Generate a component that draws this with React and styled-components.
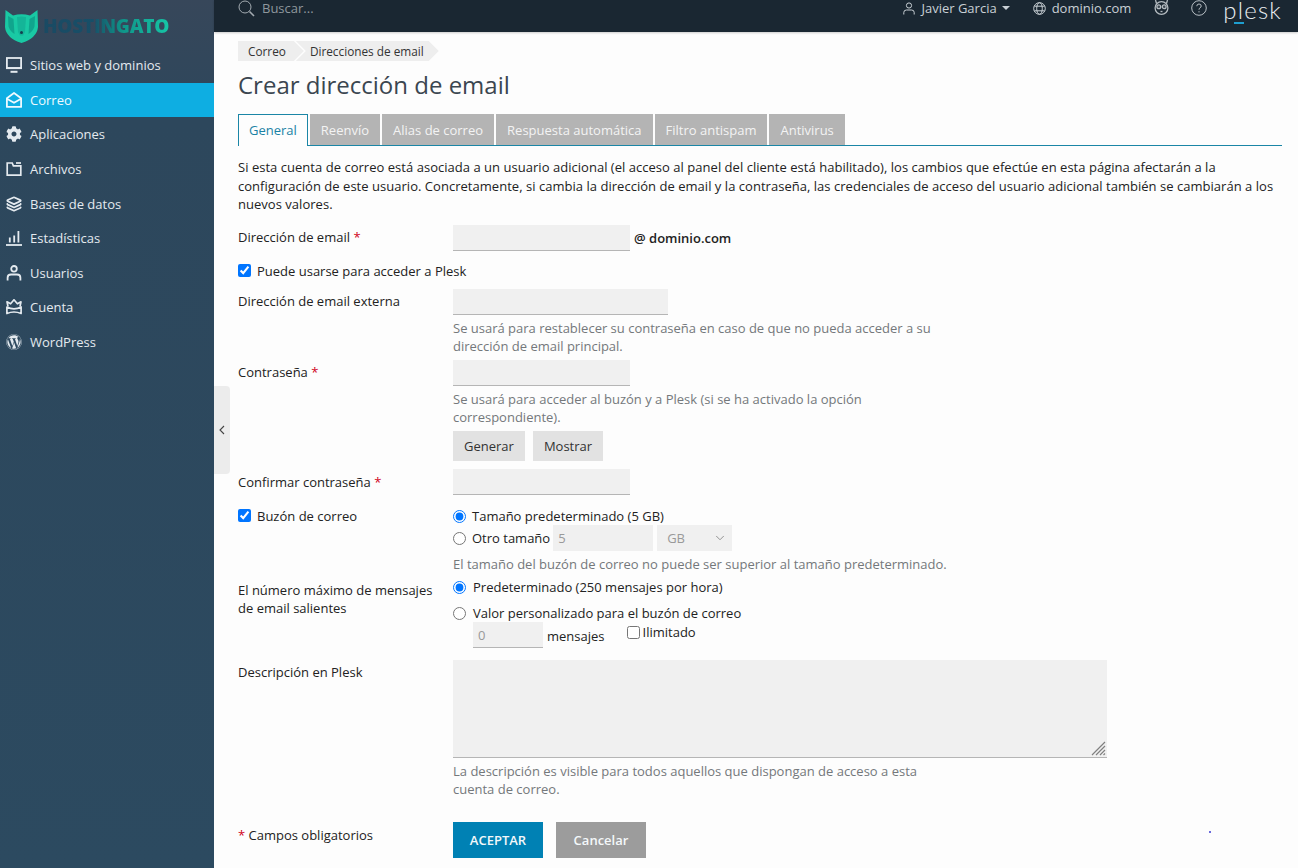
import React from 'react';
import styled, { createGlobalStyle } from 'styled-components';
import { FaWordpress, FaCog } from 'react-icons/fa';
import { Layers, ChevronDown } from 'lucide-react';

const GlobalStyle = createGlobalStyle`
  html, body { margin: 0; padding: 0; height: 100%; overflow: hidden; }
  body { font-family: "Open Sans", "Liberation Sans", sans-serif; font-size: 13px; color: #222; background: #fdfdfd; }
  * { box-sizing: border-box; }
`;

const Page = styled.div`
  display: flex;
  height: 868px;
  position: relative;
`;

const Sidebar = styled.aside`
  width: 214px;
  flex: none;
  background: linear-gradient(180deg, #37475a 0, #2d475c 120px, #2c4a60 100%);
`;

const LogoWrap = styled.div`
  height: 48px;
  display: flex;
  align-items: center;
  padding: 5px 0 0 5px;
  gap: 5px;
`;

const LogoText = styled.span`
  font-family: "Open Sans", sans-serif;
  font-weight: 800;
  font-size: 19px;
  letter-spacing: -0.25px;
  margin-top: -2px;
  background: linear-gradient(90deg, #1a4a63 0, #174f68 40%, #0f9388 62%, #16c5a6 100%);
  -webkit-background-clip: text;
  background-clip: text;
  color: transparent;
`;

const NavList = styled.nav`
  display: flex;
  flex-direction: column;
`;

const NavItem = styled.a`
  height: 34.6px;
  display: flex;
  align-items: center;
  gap: 8px;
  padding-left: 6px;
  color: ${(p) => (p.$active ? '#eefaff' : '#e4eaef')};
  background: ${(p) => (p.$active ? '#0eaee2' : 'transparent')};
  font-size: 13px;
  svg { width: 16px; height: 16px; flex: none; }
`;

const Main = styled.div`
  flex: 1;
  min-width: 0;
  display: flex;
  flex-direction: column;
`;

const Topbar = styled.header`
  height: 32px;
  flex: none;
  background: #1a2732;
  box-shadow: 0 1px 2px rgba(0, 0, 0, 0.2);
  display: flex;
  align-items: flex-start;
  color: #c9d0d5;
  padding: 0 16px 0 24px;
`;

const Search = styled.div`
  display: flex;
  align-items: center;
  gap: 7px;
  color: #8f979d;
  height: 16px;
  flex: 1;
`;

const TopItem = styled.div`
  display: flex;
  align-items: center;
  gap: 6px;
  margin-right: ${(p) => p.$mr}px;
  height: 16px;
  white-space: nowrap;
`;

const Caret = styled.span`
  width: 0;
  height: 0;
  border-left: 4px solid transparent;
  border-right: 4px solid transparent;
  border-top: 4px solid #c9d0d5;
  margin-left: -1px;
`;

const PleskLogo = styled.div`
  position: relative;
  font-family: "Lato", sans-serif;
  font-weight: 300;
  font-size: 24px;
  letter-spacing: 1.2px;
  line-height: 20px;
  height: 24px;
  color: #e8edf0;
  &::after {
    content: '';
    position: absolute;
    left: 11px;
    top: 22px;
    width: 10px;
    height: 2px;
    background: #1e9fd0;
  }
`;

const Content = styled.main`
  flex: 1;
  padding: 9px 16px 0 24px;
  min-height: 0;
`;

const Crumbs = styled.div`
  display: flex;
  height: 20px;
`;

const Crumb = styled.span`
  display: flex;
  align-items: center;
  height: 20px;
  background: #eeeeee;
  font-size: 11.8px;
  color: #333;
  padding: ${(p) => (p.$first ? '0 18px 1px 10px' : '0 15px 1px 14px')};
  margin-left: ${(p) => (p.$first ? 0 : '-8px')};
  clip-path: ${(p) =>
    p.$first
      ? 'polygon(0 0, calc(100% - 10px) 0, 100% 50%, calc(100% - 10px) 100%, 0 100%)'
      : 'polygon(0 0, calc(100% - 10px) 0, 100% 50%, calc(100% - 10px) 100%, 0 100%, 10px 50%)'};
`;

const Title = styled.h1`
  font-weight: 400;
  font-size: 24px;
  line-height: 32px;
  color: #3b4650;
  margin: 8px 0 13px;
`;

const Tabs = styled.div`
  display: flex;
  gap: 1px;
  height: 32px;
  border-bottom: 1px solid #1b86a6;
`;

const Tab = styled.a`
  display: flex;
  align-items: center;
  height: ${(p) => (p.$active ? '32px' : '31px')};
  padding: ${(p) => (p.$active ? '0 10px 1px' : '0 11px')};
  margin-right: 1px;
  color: ${(p) => (p.$active ? '#1a82a5' : '#f3f3f3')};
  background: ${(p) => (p.$active ? '#fdfdfd' : '#b4b4b4')};
  border: ${(p) => (p.$active ? '1px solid #1b86a6' : '0')};
  border-bottom: 0;
  font-size: 13px;
`;

const Intro = styled.p`
  margin: 12px 0 11.5px;
  font-size: 13px;
  letter-spacing: 0.03px;
  line-height: 18.5px;
  color: #222;
`;

const Row = styled.div`
  display: grid;
  grid-template-columns: 215px 1fr;
  margin-bottom: ${(p) => p.$mb ?? 0}px;
`;

const Label = styled.div`
  font-size: 13px;
  line-height: 18px;
  color: #222;
  padding: ${(p) => p.$pt ?? 3}px 15px 0 0;
`;

const CheckLabel = styled.label`
  display: flex;
  align-items: flex-start;
  gap: 6px;
  font-size: 13px;
  line-height: 18px;
  color: #222;
  padding-top: ${(p) => p.$pt ?? 0}px;
  grid-column: ${(p) => (p.$wide ? '1 / 3' : 'auto')};
  input { margin: 2px 0 0; width: 13px; height: 13px; }
`;

const Req = styled.span`
  color: #d0021b;
`;

const Field = styled.div`
  display: flex;
  flex-direction: column;
  align-items: flex-start;
`;

const Inline = styled.div`
  display: flex;
  align-items: center;
  height: ${(p) => p.$h || 'auto'};
  margin: ${(p) => p.$mt ?? 0}px 0 0 ${(p) => p.$ml ?? 0}px;
`;

const TextInput = styled.input`
  width: ${(p) => p.$w}px;
  height: 26px;
  border: 0;
  border-bottom: ${(p) => (p.$flat ? '0' : '1px solid #b5b5b5')};
  margin-left: ${(p) => p.$ml ?? 0}px;
  background: #f0f0f0;
  padding: 0 5px;
  font: inherit;
  color: #999;
  outline: none;
`;

const Domain = styled.strong`
  font-weight: 600;
  margin-left: 4px;
  font-size: 13px;
`;

const Hint = styled.div`
  width: ${(p) => p.$w || 500}px;
  margin-top: ${(p) => p.$mt ?? 4}px;
  font-size: 13px;
  line-height: 18px;
  color: #74787b;
`;

const Buttons = styled.div`
  display: flex;
  gap: 8px;
  margin-top: 5px;
`;

const GreyButton = styled.button`
  height: 30px;
  border: 0;
  padding: 0 11px;
  background: #e2e2e2;
  font: inherit;
  color: #333;
`;

const RadioLine = styled.label`
  display: flex;
  align-items: center;
  gap: ${(p) => p.$gap ?? 6}px;
  height: ${(p) => p.$h ?? 22}px;
  font-size: 13px;
  color: #222;
  white-space: nowrap;
  input { margin: 0; width: 13px; height: 13px; }
`;

const SelectWrap = styled.div`
  position: relative;
  margin-left: 4px;
  svg {
    position: absolute;
    right: 5px;
    top: 6px;
    width: 14px;
    height: 14px;
    color: #8c8c8c;
    pointer-events: none;
  }
`;

const SizeSelect = styled.select`
  display: block;
  appearance: none;
  width: 75px;
  height: 26px;
  border: 0;
  background: #f0f0f0;
  font: inherit;
  color: #999;
  padding-left: 10px;
  opacity: 1;
`;

const Unit = styled.span`
  margin: 2px 0 0 4px;
`;

const UnlimitedBox = styled.label`
  display: flex;
  align-items: flex-start;
  gap: 3px;
  margin: -7px 0 0 22px;
  line-height: 18px;
  input { margin: 3px 0 0; width: 13px; height: 13px; }
`;

const AreaWrap = styled.div`
  position: relative;
  width: 654px;
  svg {
    position: absolute;
    right: 1px;
    bottom: 2px;
    pointer-events: none;
  }
`;

const DescArea = styled.textarea`
  display: block;
  width: 654px;
  height: 98px;
  border: 0;
  border-bottom: 1px solid #b5b5b5;
  background: #f0f0f0;
  outline: none;
  resize: none;
`;

const Footer = styled.div`
  display: grid;
  grid-template-columns: 215px 1fr;
  margin-top: 24px;
  position: relative;
`;

const FooterLabel = styled.div`
  padding-top: 4px;
  line-height: 18px;
`;

const FooterButtons = styled.div`
  display: flex;
  gap: 13px;
`;

const ActionButton = styled.button`
  width: 90px;
  height: 36px;
  border: 0;
  background: ${(p) => (p.$primary ? '#0081b4' : '#9c9c9c')};
  color: #f4f8fa;
  font: inherit;
  font-weight: 600;
  font-size: 13px;
`;

const Speck = styled.span`
  position: absolute;
  left: 971px;
  top: 9px;
  width: 2px;
  height: 2px;
  background: #3a3ad0;
  border-radius: 50%;
`;

const Collapse = styled.div`
  position: absolute;
  left: 214px;
  top: 386px;
  width: 16px;
  height: 88px;
  background: #ececec;
  border-radius: 0 4px 4px 0;
  display: flex;
  align-items: center;
  justify-content: center;
  color: #444;
`;

const CatLogo = () => (
  <svg width="33" height="33" viewBox="0 0 33 33">
    <path d="M.5 0 8 5.500Q16.500 3 25 5.500L32.500 0 33 17Q32 28 16.500 33 1 28 0 17Z" fill="#19c9a4" />
    <path d="M3 6 8.500 9 9.500 24Q5 21 3.500 16.500Z M30 6 24.500 9 23.500 24Q28 21 29.500 16.500Z" fill="#10a58d" />
    <path d="M12 7Q16.500 6 21 7L20 22 18 25.500H15L13 22Z" fill="#14b598" />
    <circle cx="16.500" cy="22.500" r="1.500" fill="#14404f" />
  </svg>
);

const icons = {
  monitor: (
    <svg viewBox="0 0 16 16" fill="none" stroke="currentColor" strokeWidth="1.8">
      <rect x="0.9" y="1" width="14.2" height="10" />
      <path d="M0 11.200h16" strokeWidth="1.800" />
      <path d="M4.500 14.800h7" strokeWidth="2" />
    </svg>
  ),
  mail: (
    <svg viewBox="0 0 16 16" fill="none" stroke="currentColor" strokeWidth="1.8" strokeLinejoin="round">
      <path d="M.9 6.200 8 1l7.100 5.200v8.700H.9z" />
      <path d="M.9 6.800 8 10.800l7.100-4" />
    </svg>
  ),
  folder: (
    <svg viewBox="0 0 16 16" fill="none" stroke="currentColor" strokeWidth="1.7">
      <path d="M1.200 2v12.200h13.600V4.800H7.400L6.200 2z" />
      <path d="M10 2h5" />
    </svg>
  ),
  chart: (
    <svg viewBox="0 0 16 16" fill="none" stroke="currentColor" strokeWidth="1.8">
      <path d="M0 15h16" />
      <path d="M3.800 12.500V7.500M8.200 12.500V5.500M12.400 12.500V1" />
    </svg>
  ),
  user: (
    <svg viewBox="0 0 16 16" fill="none" stroke="currentColor" strokeWidth="1.8">
      <circle cx="8" cy="3.800" r="2.800" />
      <path d="M1.600 15.500v-2.800Q1.600 9.500 5 9.500h6q3.400 0 3.400 3.200v2.800" />
    </svg>
  ),
  crown: (
    <svg viewBox="0 0 16 16" fill="none" stroke="currentColor" strokeWidth="1.7" strokeLinejoin="round">
      <path d="M2 7.500 1 2.800l3.600 2L8 .8l3.400 4 3.600-2-1 4.700" />
      <path d="M.9 8q7.100 3.600 14.200 0v6.500Q8 11.500.9 14.500z" />
    </svg>
  ),
};

const navItems = [
  { label: 'Sitios web y dominios', icon: icons.monitor },
  { label: 'Correo', icon: icons.mail, active: true },
  { label: 'Aplicaciones', icon: <FaCog /> },
  { label: 'Archivos', icon: icons.folder },
  { label: 'Bases de datos', icon: <Layers strokeWidth={2.7} /> },
  { label: 'Estadísticas', icon: icons.chart },
  { label: 'Usuarios', icon: icons.user },
  { label: 'Cuenta', icon: icons.crown },
  { label: 'WordPress', icon: <FaWordpress /> },
];

const tabs = ['General', 'Reenvío', 'Alias de correo', 'Respuesta automática', 'Filtro antispam', 'Antivirus'];

function App() {
  return (
    <Page>
      <GlobalStyle />
      <Sidebar>
        <LogoWrap>
          <CatLogo />
          <LogoText>HOSTINGATO</LogoText>
        </LogoWrap>
        <NavList>
          {navItems.map((item) => (
            <NavItem key={item.label} $active={item.active}>
              {item.icon}
              {item.label}
            </NavItem>
          ))}
        </NavList>
      </Sidebar>

      <Collapse>
        <svg width="6" height="10" viewBox="0 0 6 10" fill="none" stroke="#444" strokeWidth="1.1">
          <path d="M5 1 1 5l4 4" />
        </svg>
      </Collapse>

      <Main>
        <Topbar>
          <Search>
            <svg width="17" height="17" viewBox="0 0 17 17" fill="none" stroke="#a3abb1" strokeWidth="1">
              <circle cx="7" cy="7" r="6" />
              <path d="m11.500 11.500 4.500 4.500" strokeWidth="1.600" />
            </svg>
            Buscar...
          </Search>
          <TopItem $mr={23}>
            <svg width="12" height="13" viewBox="0 0 12 13" fill="none" stroke="#c9d0d5" strokeWidth="1">
              <circle cx="6" cy="3.500" r="2.600" />
              <path d="M.8 12.500v-2Q.8 8 3.400 8h5.200q2.600 0 2.600 2.500v2" />
            </svg>
            Javier Garcia
            <Caret />
          </TopItem>
          <TopItem $mr={23}>
            <svg width="13" height="13" viewBox="0 0 13 13" fill="none" stroke="#c9d0d5" strokeWidth="1">
              <circle cx="6.500" cy="6.500" r="5.800" />
              <ellipse cx="6.500" cy="6.500" rx="2.800" ry="5.800" />
              <path d="M1.400 4.200h10.200M1.400 8.800h10.200" />
            </svg>
            dominio.com
          </TopItem>
          <TopItem $mr={22}>
            <svg width="15" height="16" viewBox="0 0 15 16" fill="none" stroke="#b4bbc0" strokeWidth="1.300">
              <circle cx="7.500" cy="8" r="6.400" />
              <path d="M2.500 3.500 1.500 0M12.500 3.500l1-3.500" />
              <circle cx="4.800" cy="6.800" r="1.900" fill="#3a4650" />
              <circle cx="10.200" cy="6.800" r="1.900" fill="#3a4650" />
              <path d="M6.500 11.500h2" />
            </svg>
          </TopItem>
          <TopItem $mr={16}>
            <svg width="16" height="16" viewBox="0 0 16 16" fill="none" stroke="#b9c0c5" strokeWidth="1">
              <circle cx="8" cy="8" r="7.300" />
              <path d="M5.800 6.200q0-2.200 2.200-2.200t2.200 2q0 1.200-1.200 1.900T8 9.700" />
              <path d="M8 11.200v1.200" />
            </svg>
          </TopItem>
          <PleskLogo>plesk</PleskLogo>
        </Topbar>

        <Content>
          <Crumbs>
            <Crumb $first>Correo</Crumb>
            <Crumb>Direcciones de email</Crumb>
          </Crumbs>
          <Title>Crear dirección de email</Title>
          <Tabs>
            {tabs.map((t, i) => (
              <Tab key={t} $active={i === 0}>{t}</Tab>
            ))}
          </Tabs>
          <Intro>
            Si esta cuenta de correo está asociada a un usuario adicional (el acceso al panel del cliente está habilitado), los cambios que efectúe en esta página afectarán a la configuración de este usuario. Concretamente, si cambia la dirección de email y la contraseña, las credenciales de acceso del usuario adicional también se cambiarán a los nuevos valores.
          </Intro>

          <Row $mb={11}>
            <Label>Dirección de email <Req>*</Req></Label>
            <Inline>
              <TextInput $w={177} />
              <Domain>@ dominio.com</Domain>
            </Inline>
          </Row>

          <Row $mb={9}>
            <CheckLabel $wide>
              <input type="checkbox" defaultChecked />
              Puede usarse para acceder a Plesk
            </CheckLabel>
          </Row>

          <Row $mb={5}>
            <Label>Dirección de email externa</Label>
            <Field>
              <TextInput $w={215} />
              <Hint>Se usará para restablecer su contraseña en caso de que no pueda acceder a su dirección de email principal.</Hint>
            </Field>
          </Row>

          <Row $mb={8}>
            <Label>Contraseña <Req>*</Req></Label>
            <Field>
              <TextInput $w={177} />
              <Hint>Se usará para acceder al buzón y a Plesk (si se ha activado la opción correspondiente).</Hint>
              <Buttons>
                <GreyButton>Generar</GreyButton>
                <GreyButton>Mostrar</GreyButton>
              </Buttons>
            </Field>
          </Row>

          <Row $mb={10}>
            <Label $pt={4}>Confirmar contraseña <Req>*</Req></Label>
            <TextInput $w={177} />
          </Row>

          <Row $mb={3}>
            <CheckLabel $pt={2}>
              <input type="checkbox" defaultChecked />
              Buzón de correo
            </CheckLabel>
            <Field>
              <RadioLine>
                <input type="radio" name="size" defaultChecked />
                Tamaño predeterminado (5 GB)
              </RadioLine>
              <Inline $h="22px">
                <RadioLine>
                  <input type="radio" name="size" />
                  Otro tamaño
                </RadioLine>
                <TextInput $w={100} $ml={3} $flat defaultValue="5" />
                <SelectWrap>
                  <SizeSelect disabled defaultValue="GB">
                    <option>GB</option>
                  </SizeSelect>
                  <ChevronDown strokeWidth={1.6} />
                </SelectWrap>
              </Inline>
              <Hint $w={600} $mt={6}>El tamaño del buzón de correo no puede ser superior al tamaño predeterminado.</Hint>
            </Field>
          </Row>

          <Row $mb={12}>
            <Label $pt={5}>El número máximo de mensajes de email salientes</Label>
            <Field>
              <RadioLine $gap={7}>
                <input type="radio" name="limit" defaultChecked />
                Predeterminado (250 mensajes por hora)
              </RadioLine>
              <RadioLine $gap={7} $h={30}>
                <input type="radio" name="limit" />
                Valor personalizado para el buzón de correo
              </RadioLine>
              <Inline $ml={20} $mt={-6}>
                <TextInput $w={70} defaultValue="0" />
                <Unit>mensajes</Unit>
                <UnlimitedBox>
                  <input type="checkbox" />
                  Ilimitado
                </UnlimitedBox>
              </Inline>
            </Field>
          </Row>

          <Row>
            <Label>Descripción en Plesk</Label>
            <Field>
              <AreaWrap>
                <DescArea />
                <svg width="15" height="15" viewBox="0 0 15 15" stroke="#808080" strokeWidth="1.2">
                  <path d="M1 14 14 1M5 14l9-9M9 14l5-5M12.500 14l1.500-1.500" />
                </svg>
              </AreaWrap>
              <Hint $w={480}>La descripción es visible para todos aquellos que dispongan de acceso a esta cuenta de correo.</Hint>
            </Field>
          </Row>

          <Footer>
            <FooterLabel><Req>*</Req> Campos obligatorios</FooterLabel>
            <FooterButtons>
              <ActionButton $primary>ACEPTAR</ActionButton>
              <ActionButton>Cancelar</ActionButton>
            </FooterButtons>
            <Speck />
          </Footer>
        </Content>
      </Main>
    </Page>
  );
}

export default App;
